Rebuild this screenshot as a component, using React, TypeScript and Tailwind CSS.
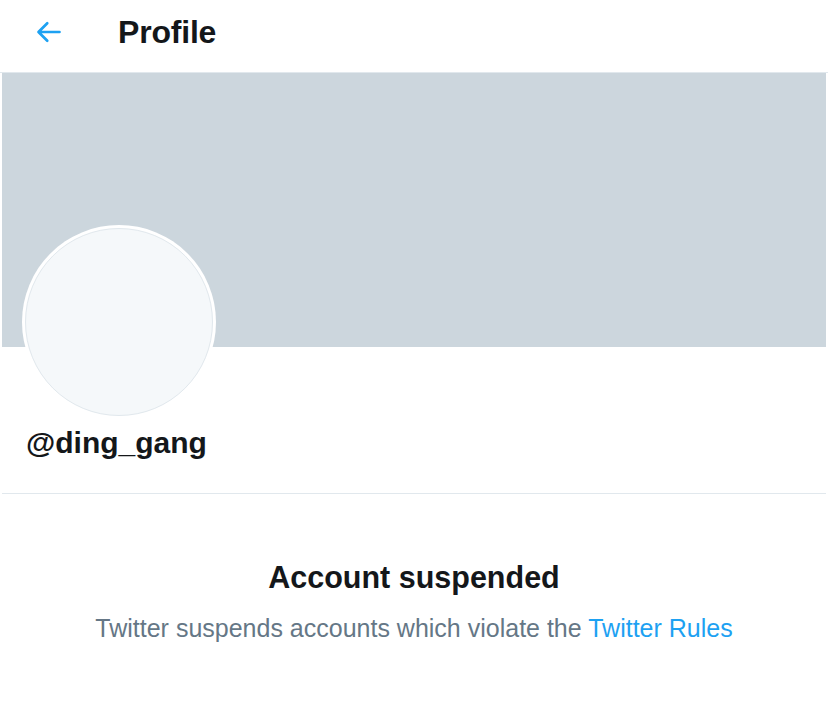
export default function App() {
  return (
    <div className="min-h-[707px] w-[828px] bg-white font-['Liberation_Sans',Arial,sans-serif] text-[#14171a]">
      <header className="flex h-[73px] items-center border-b border-[#e1e8ed] pb-[9px]">
        <button type="button" aria-label="Back" className="ml-[35px] flex h-[28px] w-[28px] items-center justify-center text-[#1da1f2]">
          <svg viewBox="0 0 24 24" className="h-[28px] w-[28px]" fill="none" stroke="currentColor" strokeWidth="2.3" strokeLinecap="round" strokeLinejoin="round">
            <path d="M21 12H3.5M10.5 4.5 3 12l7.5 7.5" />
          </svg>
        </button>
        <h1 className="ml-[55px] text-[32px] font-bold leading-[40px] tracking-[-0.2px]">Profile</h1>
      </header>

      <div className="mx-[2px] h-[274px] bg-[#ccd6dd]" />

      <div className="px-[22px]">
        <div className="-mt-[122px] h-[194px] w-[194px] rounded-full bg-white p-[3px]">
          <div className="h-full w-full rounded-full border border-[#e1e8ed] bg-[#f5f8fa]" />
        </div>
        <p className="mt-[4px] pl-[4px] text-[30px] font-bold leading-[40px]">@ding_gang</p>
      </div>

      <div className="mx-[2px] mt-[30px] border-t border-[#e1e8ed]" />

      <div className="flex flex-col items-center pt-[63px]">
        <h2 className="text-[30.5px] font-bold leading-[40px]">Account suspended</h2>
        <p className="mt-[14px] text-[25px] leading-[34px] text-[#657786]">
          Twitter suspends accounts which violate the{" "}
          <a href="#" className="text-[#1da1f2]">Twitter Rules</a>
        </p>
      </div>
    </div>
  );
}
